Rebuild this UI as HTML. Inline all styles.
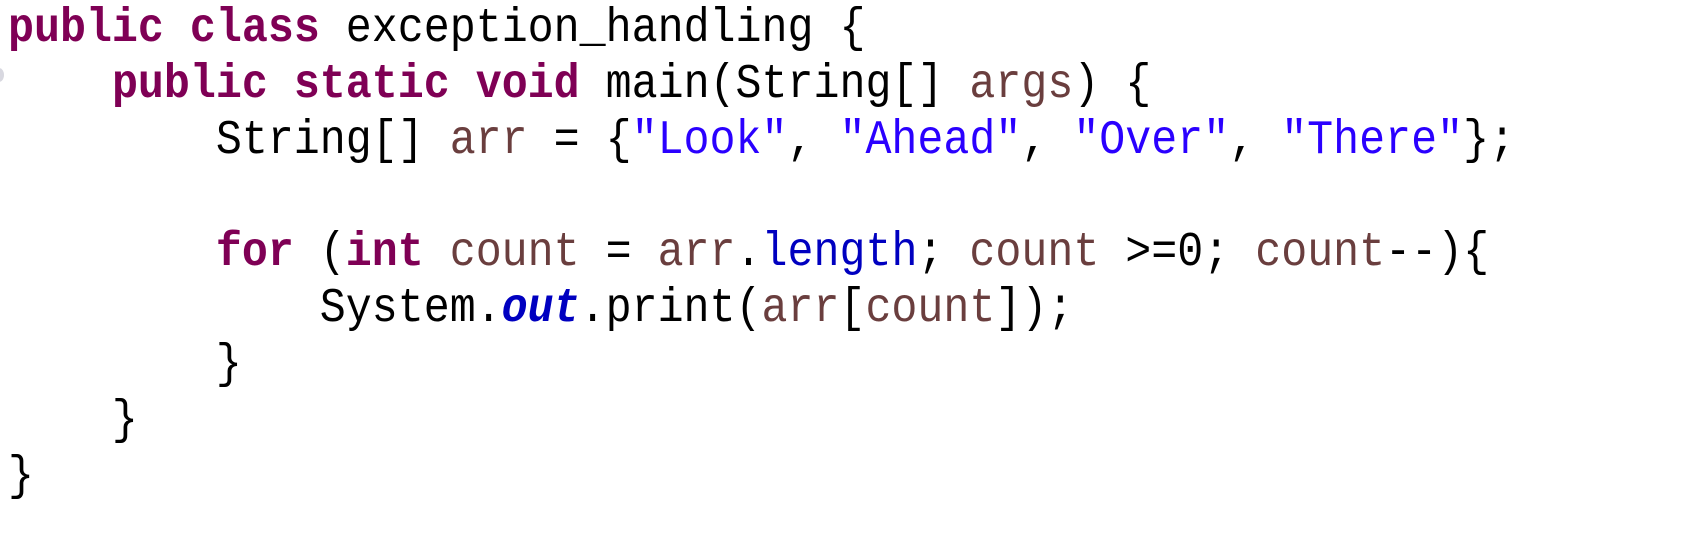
<!DOCTYPE html>
<html><head><meta charset="utf-8"><style>
html,body{margin:0;padding:0;background:#fff;width:1690px;height:554px;overflow:hidden}
pre{margin:0;position:absolute;left:8px;top:2px;font-family:"Liberation Mono",monospace;font-size:43.3px;line-height:50px;color:#000;transform:scaleY(1.12);transform-origin:0 0}
.k{color:#7f0055;font-weight:bold}
.v{color:#6a3e3e}
.s{color:#2a00ff}
.f{color:#0000c0}
.o{color:#0000c0;font-weight:bold;font-style:italic}
.dot{position:absolute;left:-6px;top:68px;width:10px;height:14px;border-radius:50%;background:#d8d8e0}
</style></head><body>
<div class="dot"></div>
<pre><span class="k">public</span> <span class="k">class</span> exception_handling {
    <span class="k">public</span> <span class="k">static</span> <span class="k">void</span> main(String[] <span class="v">args</span>) {
        String[] <span class="v">arr</span> = {<span class="s">"Look"</span>, <span class="s">"Ahead"</span>, <span class="s">"Over"</span>, <span class="s">"There"</span>};

        <span class="k">for</span> (<span class="k">int</span> <span class="v">count</span> = <span class="v">arr</span>.<span class="f">length</span>; <span class="v">count</span> &gt;=0; <span class="v">count</span>--){
            System.<span class="o">out</span>.print(<span class="v">arr</span>[<span class="v">count</span>]);
        }
    }
}</pre>
</body></html>
